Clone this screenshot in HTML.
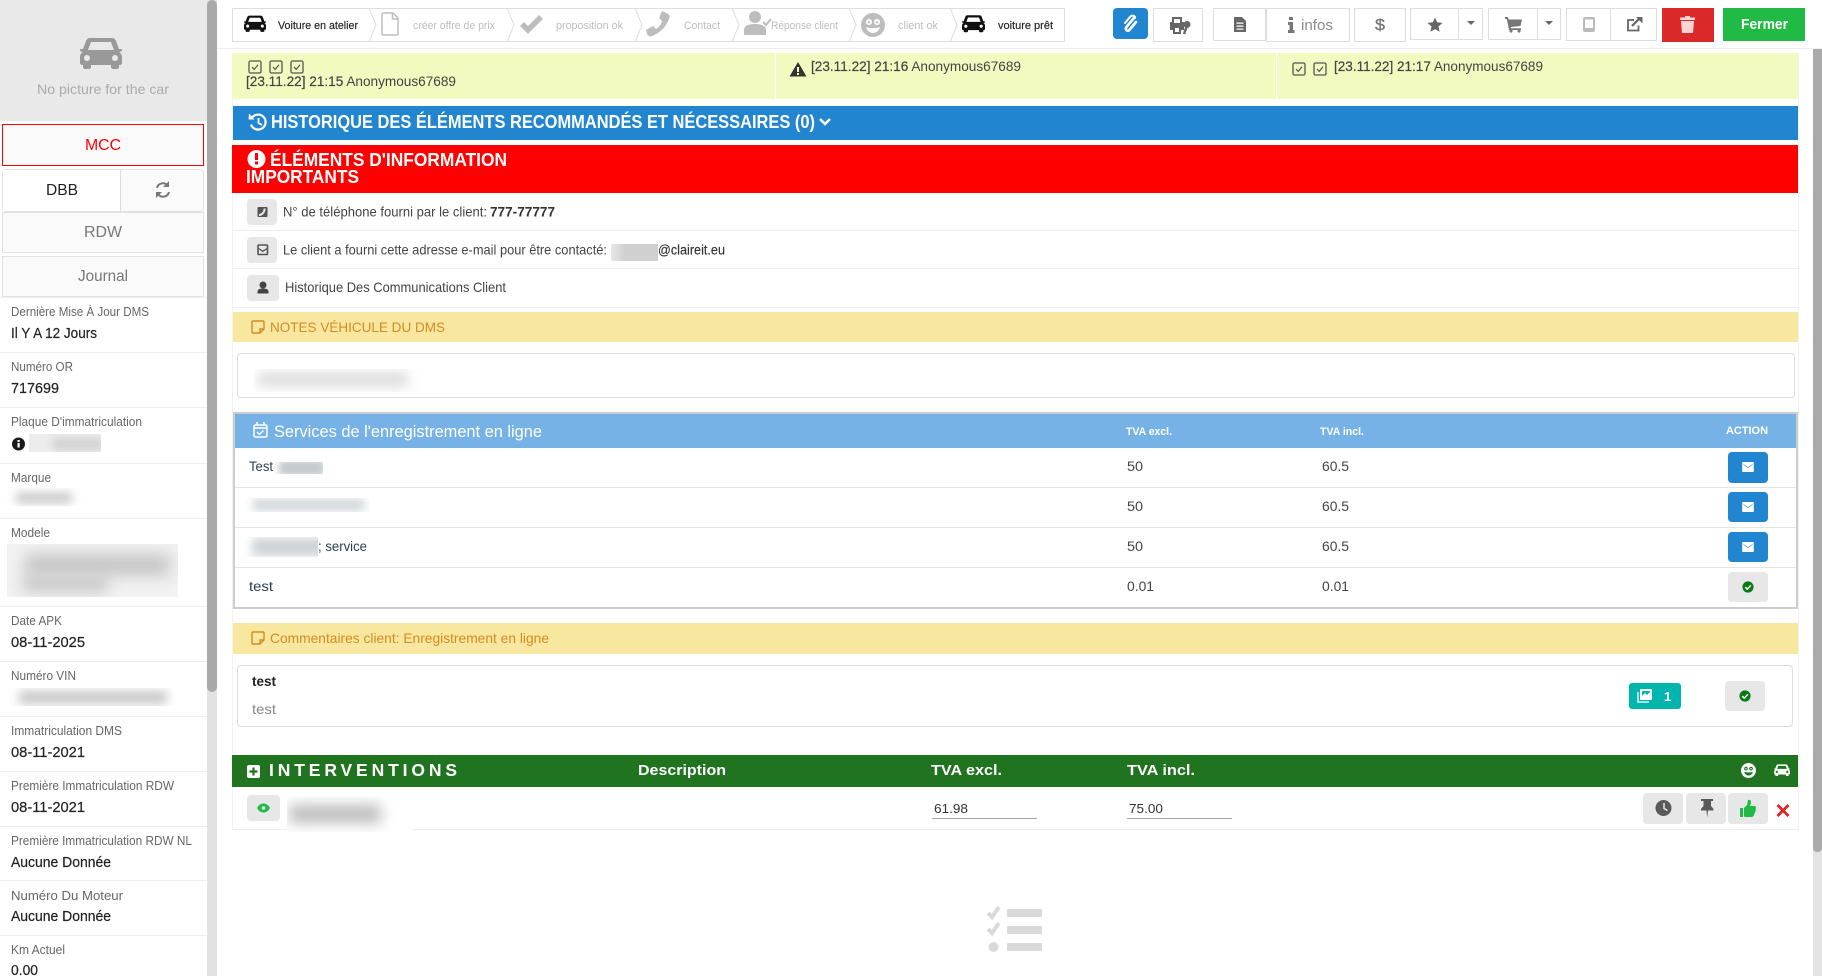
<!DOCTYPE html>
<html lang="fr"><head><meta charset="utf-8"><title>Voiture en atelier</title>
<style>
html,body{margin:0;padding:0;background:#fff}
body{position:relative;width:1822px;height:976px;overflow:hidden;font-family:"Liberation Sans",sans-serif}
.a{position:absolute;box-sizing:border-box}
.btn{position:absolute;box-sizing:border-box;background:#fff;border:1px solid #ddd}
.g{position:absolute;background:#e7e7e7;border-radius:4px}
.bl{position:absolute;background:#2185d0;border-radius:4px}
.hr{position:absolute;left:0;width:207px;height:1px;background:#eee}
.blur{position:absolute;overflow:hidden;background:#fff}
.blur i{position:absolute;display:block;background:#b5b5b5;filter:blur(5px)}
svg.over{position:absolute;left:0;top:0;font-family:"Liberation Sans",sans-serif}
.l{font-size:13px;fill:#666}
.v{font-size:14.5px;fill:#222;stroke:#222;stroke-width:.2px}
.st{font-size:11px;fill:#bdbdbd}
.n{font-size:14px;fill:#444}
.s{font-size:14px;fill:#444}
.w{fill:#fff}
.h{font-size:18px;font-weight:bold;fill:#fff}
</style></head><body>

<!-- sidebar -->
<div class="a" style="left:0;top:0;width:207px;height:121px;background:#e9e9e9"></div>
<div class="a" style="left:207px;top:0;width:10px;height:976px;background:#e2e2e2"></div>
<div class="a" style="left:207px;top:0;width:10px;height:692px;background:#a9a9a9;border-radius:5px"></div>
<div class="a" style="left:2px;top:124px;width:202px;height:42px;background:#fafafa;border:1px solid #f00"></div>
<div class="a" style="left:2px;top:169px;width:202px;height:43px;background:#fafafa;border:1px solid #e2e2e2;border-radius:4px"></div>
<div class="a" style="left:3px;top:170px;width:118px;height:41px;background:#fff;border-right:1px solid #ddd"></div>
<div class="a" style="left:2px;top:212px;width:202px;height:41px;background:#fafafa;border:1px solid #e2e2e2"></div>
<div class="a" style="left:2px;top:256px;width:202px;height:41px;background:#fafafa;border:1px solid #e2e2e2"></div>
<div class="hr" style="top:297px"></div><div class="hr" style="top:352px"></div><div class="hr" style="top:407px"></div><div class="hr" style="top:463px"></div><div class="hr" style="top:518px"></div><div class="hr" style="top:606px"></div><div class="hr" style="top:661px"></div><div class="hr" style="top:716px"></div><div class="hr" style="top:771px"></div><div class="hr" style="top:826px"></div><div class="hr" style="top:880px"></div><div class="hr" style="top:935px"></div>
<div class="blur" style="left:29px;top:434px;width:72px;height:18px;background:#ececec"><i style="left:24px;top:4px;width:50px;height:12px;background:#d2d2d2;filter:blur(4px)"></i></div>
<div class="blur" style="left:6px;top:488px;width:76px;height:18px"><i style="left:10px;top:5px;width:56px;height:10px;background:#c4c4c4;filter:blur(5px)"></i></div>
<div class="blur" style="left:7px;top:544px;width:171px;height:53px;background:#f2f2f2"><i style="left:18px;top:11px;width:145px;height:20px;background:#c2c2c2;filter:blur(8px)"></i><i style="left:16px;top:32px;width:85px;height:16px;background:#c8c8c8;filter:blur(7px)"></i></div>
<div class="blur" style="left:7px;top:688px;width:171px;height:18px"><i style="left:12px;top:3px;width:148px;height:13px;background:#c8c8c8;filter:blur(5px)"></i></div>

<!-- top bar -->
<div class="a" style="left:217px;top:48px;width:1605px;height:1px;background:#eee"></div>
<div class="a" style="left:232px;top:8px;width:833px;height:34px;border:1px solid #ddd"></div>
<div class="btn" style="left:1113px;top:8px;width:35px;height:31px;background:#2185d0;border:0;border-radius:4px"></div>
<div class="btn" style="left:1153px;top:8px;width:50px;height:34px"></div>
<div class="btn" style="left:1213px;top:8px;width:53px;height:33px"></div>
<div class="btn" style="left:1266px;top:8px;width:84px;height:34px"></div>
<div class="btn" style="left:1354px;top:8px;width:52px;height:34px"></div>
<div class="btn" style="left:1410px;top:8px;width:49px;height:32px"></div>
<div class="btn" style="left:1458px;top:8px;width:25px;height:32px"></div>
<div class="btn" style="left:1488px;top:8px;width:50px;height:32px"></div>
<div class="btn" style="left:1537px;top:8px;width:24px;height:32px"></div>
<div class="btn" style="left:1566px;top:8px;width:45px;height:33px"></div>
<div class="btn" style="left:1610px;top:8px;width:47px;height:33px"></div>
<div class="a" style="left:1662px;top:8px;width:52px;height:34px;background:#db2828"></div>
<div class="a" style="left:1723px;top:8px;width:82px;height:33px;background:#21ba45"></div>

<!-- main content frame -->
<div class="a" style="left:232px;top:53px;width:1567px;height:776px;border-left:1px solid #f2f2f2;border-right:1px solid #f2f2f2"></div>
<div class="a" style="left:1813px;top:49px;width:9px;height:927px;background:#e4e4e4"></div>
<div class="a" style="left:1813px;top:49px;width:9px;height:803px;background:#aaa;border-radius:0 0 4px 4px"></div>

<div class="a" style="left:232px;top:53px;width:1566px;height:46px;background:#f3fabf"></div>
<div class="a" style="left:775px;top:53px;width:1px;height:46px;background:#fff"></div>
<div class="a" style="left:1276px;top:53px;width:1px;height:46px;background:#fff"></div>
<div class="a" style="left:233px;top:106px;width:1565px;height:34px;background:#2185d0"></div>
<div class="a" style="left:232px;top:145px;width:1566px;height:48px;background:#f00"></div>
<div class="a" style="left:233px;top:230px;width:1565px;height:1px;background:#eee"></div>
<div class="a" style="left:233px;top:268px;width:1565px;height:1px;background:#eee"></div>
<div class="a" style="left:233px;top:307px;width:1565px;height:1px;background:#eee"></div>
<div class="g" style="left:247px;top:199px;width:30px;height:26px"></div>
<div class="g" style="left:247px;top:237px;width:30px;height:26px"></div>
<div class="g" style="left:247px;top:275px;width:32px;height:26px"></div>
<div class="blur" style="left:611px;top:244px;width:47px;height:17px;background:linear-gradient(90deg,#e8e8e8,#d0d0d0 30%,#d0d0d0)"></div>

<div class="a" style="left:233px;top:312px;width:1565px;height:30px;background:#f8e89f"></div>
<div class="a" style="left:237px;top:353px;width:1558px;height:45px;border:1px solid #ddd;border-radius:4px"></div>
<div class="blur" style="left:254px;top:369px;width:171px;height:23px"><i style="left:4px;top:3px;width:150px;height:15px;background:#dcdcdc;filter:blur(6px)"></i></div>

<!-- table -->
<div class="a" style="left:233px;top:412px;width:1565px;height:197px;border:2px solid #ccc"></div>
<div class="a" style="left:235px;top:414px;width:1561px;height:34px;background:#76b2e6"></div>
<div class="a" style="left:235px;top:487px;width:1561px;height:1px;background:#e4e4e4"></div>
<div class="a" style="left:235px;top:527px;width:1561px;height:1px;background:#e4e4e4"></div>
<div class="a" style="left:235px;top:567px;width:1561px;height:1px;background:#e4e4e4"></div>
<div class="bl" style="left:1728px;top:452px;width:40px;height:31px"></div>
<div class="bl" style="left:1728px;top:492px;width:40px;height:30px"></div>
<div class="bl" style="left:1728px;top:532px;width:40px;height:30px"></div>
<div class="g" style="left:1728px;top:572px;width:40px;height:30px"></div>
<div class="blur" style="left:273px;top:462px;width:50px;height:12px"><i style="left:6px;top:-2px;width:46px;height:16px;background:#c2c8cc;filter:blur(4px)"></i></div>
<div class="blur" style="left:245px;top:498px;width:125px;height:14px"><i style="left:8px;top:2px;width:112px;height:10px;background:#c8ced2;filter:blur(5px)"></i></div>
<div class="blur" style="left:240px;top:537px;width:78px;height:20px"><i style="left:12px;top:1px;width:76px;height:18px;background:#cdd2d6;filter:blur(5px)"></i></div>

<!-- comments -->
<div class="a" style="left:233px;top:623px;width:1565px;height:31px;background:#f8e89f"></div>
<div class="a" style="left:237px;top:665px;width:1556px;height:62px;border:1px solid #ddd;border-radius:4px"></div>
<div class="a" style="left:1629px;top:683px;width:52px;height:26px;background:#00b5ad;border-radius:3px"></div>
<div class="g" style="left:1725px;top:681px;width:40px;height:30px"></div>

<!-- interventions -->
<div class="a" style="left:232px;top:755px;width:1566px;height:32px;background:#21741f"></div>
<div class="a" style="left:232px;top:829px;width:1567px;height:1px;background:#eee"></div>
<div class="g" style="left:247px;top:795px;width:33px;height:26px"></div>
<div class="blur" style="left:287px;top:797px;width:126px;height:35px"><i style="left:2px;top:8px;width:92px;height:18px;background:#bbb;filter:blur(7px)"></i></div>
<div class="a" style="left:932px;top:818px;width:105px;height:1px;background:#aaa"></div>
<div class="a" style="left:1127px;top:818px;width:105px;height:1px;background:#aaa"></div>
<div class="g" style="left:1643px;top:793px;width:40px;height:31px"></div>
<div class="g" style="left:1686px;top:793px;width:40px;height:31px"></div>
<div class="g" style="left:1728px;top:793px;width:40px;height:31px"></div>

<svg class="over" width="1822" height="976" viewBox="0 0 1822 976">
<defs>
<symbol id="car" viewBox="0 0 42 32"><path fill-rule="evenodd" d="M10 1h22c2 0 3 1 4 3l3 8h2c1 0 1 1 1 2l-3 1c2 1 3 3 3 5v6c0 1-1 2-2 2h-1v2c0 1-1 2-2 2h-4c-1 0-2-1-2-2v-2H11v2c0 1-1 2-2 2H5c-1 0-2-1-2-2v-2H2c-1 0-2-1-2-2v-6c0-2 1-4 3-5L0 14c0-1 0-2 1-2h2l3-8c1-2 2-3 4-3zM11 5l-3 8h26l-3-8zM7 18a3 3 0 1 0 .01 0zM35 18a3 3 0 1 0 .01 0z"/></symbol>
<symbol id="cb" viewBox="0 0 14 14"><rect x="1" y="1" width="12" height="12" rx="1.5" fill="none" stroke="#555" stroke-width="1.3"/><path d="M4 7l2.2 2.4L10 4.8" fill="none" stroke="#555" stroke-width="1.2"/></symbol>
<symbol id="mail" viewBox="0 0 14 12"><path fill-rule="evenodd" d="M1 0h12a1 1 0 0 1 1 1v10a1 1 0 0 1-1 1H1a1 1 0 0 1-1-1V1a1 1 0 0 1 1-1zM1.5 3.2l5.500 4 5.500-4v-.8l-5.500 3.900-5.500-3.900z"/></symbol>
<symbol id="ok" viewBox="0 0 14 14"><circle cx="7" cy="7" r="6.5" fill="#0a7a14"/><path d="M3.8 7.2l2.3 2.3 4.2-4.4" fill="none" stroke="#fff" stroke-width="1.8"/></symbol>
<symbol id="note" viewBox="0 0 14 14"><path d="M2 1h10a1 1 0 0 1 1 1v7l-4 4H2a1 1 0 0 1-1-1V2a1 1 0 0 1 1-1zM13 9H9v4" fill="none" stroke="#d68a22" stroke-width="1.4"/></symbol>
<symbol id="smile" viewBox="0 0 24 24"><path fill-rule="evenodd" d="M12 0a12 12 0 1 1-.01 0zM8 6a3 3 0 1 0 .01 0zM16 6a3 3 0 1 0 .01 0zM8 8a1.2 1.2 0 1 1-.01 0zM16 8a1.2 1.2 0 1 1-.01 0zM5 14c1 4 4 6 7 6s6-2 7-6c-4 1.500-10 1.500-14 0z"/></symbol>
</defs>

<!-- sidebar text -->
<use href="#car" x="80" y="37" width="42" height="32" fill="#999"/>
<text x="37" y="94" font-size="14" fill="#aaa" textLength="132" lengthAdjust="spacingAndGlyphs">No picture for the car</text>
<text x="85" y="150" font-size="16" fill="#f00" textLength="36" lengthAdjust="spacingAndGlyphs">MCC</text>
<text x="46" y="195" font-size="16" fill="#222" textLength="32" lengthAdjust="spacingAndGlyphs">DBB</text>
<g fill="none" stroke="#777" stroke-width="2"><path d="M157 188a6 6 0 0 1 10.500-2.500"/><path d="M169 192a6 6 0 0 1-10.500 2.500"/></g><path d="M169 181v6h-6zM156 198v-6h6z" fill="#777"/>
<text x="84" y="237" font-size="16" fill="#777" textLength="38" lengthAdjust="spacingAndGlyphs">RDW</text>
<text x="78" y="281" font-size="16" fill="#777" textLength="50" lengthAdjust="spacingAndGlyphs">Journal</text>

<text class="l" x="11" y="316" textLength="138" lengthAdjust="spacingAndGlyphs">Dernière Mise À Jour DMS</text>
<text class="v" x="11" y="338" textLength="86" lengthAdjust="spacingAndGlyphs">Il Y A 12 Jours</text>
<text class="l" x="11" y="371" textLength="62" lengthAdjust="spacingAndGlyphs">Numéro OR</text>
<text class="v" x="11" y="393" textLength="48" lengthAdjust="spacingAndGlyphs">717699</text>
<text class="l" x="11" y="426" textLength="131" lengthAdjust="spacingAndGlyphs">Plaque D'immatriculation</text>
<circle cx="18.500" cy="444" r="6.500" fill="#1b1b1b"/><rect x="17.500" y="443" width="2.200" height="4.500" fill="#fff"/><rect x="17.500" y="440" width="2.200" height="2" fill="#fff"/>
<text class="l" x="11" y="482" textLength="40" lengthAdjust="spacingAndGlyphs">Marque</text>
<text class="l" x="11" y="537" textLength="39" lengthAdjust="spacingAndGlyphs">Modele</text>
<text class="l" x="11" y="625" textLength="51" lengthAdjust="spacingAndGlyphs">Date APK</text>
<text class="v" x="11" y="647" textLength="74" lengthAdjust="spacingAndGlyphs">08-11-2025</text>
<text class="l" x="11" y="680" textLength="65" lengthAdjust="spacingAndGlyphs">Numéro VIN</text>
<text class="l" x="11" y="735" textLength="111" lengthAdjust="spacingAndGlyphs">Immatriculation DMS</text>
<text class="v" x="11" y="757" textLength="74" lengthAdjust="spacingAndGlyphs">08-11-2021</text>
<text class="l" x="11" y="790" textLength="163" lengthAdjust="spacingAndGlyphs">Première Immatriculation RDW</text>
<text class="v" x="11" y="812" textLength="74" lengthAdjust="spacingAndGlyphs">08-11-2021</text>
<text class="l" x="11" y="845" textLength="181" lengthAdjust="spacingAndGlyphs">Première Immatriculation RDW NL</text>
<text class="v" x="11" y="867" textLength="100" lengthAdjust="spacingAndGlyphs">Aucune Donnée</text>
<text class="l" x="11" y="900" textLength="112" lengthAdjust="spacingAndGlyphs">Numéro Du Moteur</text>
<text class="v" x="11" y="921" textLength="100" lengthAdjust="spacingAndGlyphs">Aucune Donnée</text>
<text class="l" x="11" y="954" textLength="54" lengthAdjust="spacingAndGlyphs">Km Actuel</text>
<text class="v" x="11" y="975" textLength="27" lengthAdjust="spacingAndGlyphs">0.00</text>

<!-- steps -->
<g fill="none" stroke="#ddd"><path d="M369 8l7 17-7 17M507 8l7 17-7 17M635 8l7 17-7 17M732 8l7 17-7 17M849 8l7 17-7 17M950 8l7 17-7 17"/></g>
<use href="#car" x="244" y="14" width="22" height="19" fill="#111"/>
<text x="278" y="29" font-size="11" font-weight="400" fill="#222" stroke="#222" stroke-width=".15" textLength="80" lengthAdjust="spacingAndGlyphs">Voiture en atelier</text>
<path d="M383 13h10l5 5v16a1 1 0 0 1-1 1h-14a1 1 0 0 1-1-1V14a1 1 0 0 1 1-1zM392.500 13v6h5.500" fill="none" stroke="#bdbdbd" stroke-width="1.5"/>
<text class="st" x="413" y="29" textLength="82" lengthAdjust="spacingAndGlyphs">créer offre de prix</text>
<path d="M522 24l6 6 13-13" fill="none" stroke="#bdbdbd" stroke-width="5.500"/>
<text class="st" x="556" y="29" textLength="67" lengthAdjust="spacingAndGlyphs">proposition ok</text>
<path d="M662 11l6 3c2 1 2 3 1 5-3 8-9 14-17 17-2 1-4 0-5-2l-1-4 7-4 3 3c3-2 5-4 6-8l-3-3z" fill="#bdbdbd"/>
<text class="st" x="684" y="29" textLength="36" lengthAdjust="spacingAndGlyphs">Contact</text>
<circle cx="755" cy="17" r="6" fill="#bdbdbd"/><path d="M744 35v-5c0-4 4-6 11-6s11 2 11 6v5z" fill="#bdbdbd"/><path d="M763 22l3 3 5-6" fill="none" stroke="#bdbdbd" stroke-width="2"/>
<text class="st" x="771" y="29" textLength="67" lengthAdjust="spacingAndGlyphs">Réponse client</text>
<use href="#smile" x="861" y="13" width="24" height="24" fill="#bdbdbd"/>
<text class="st" x="898" y="29" textLength="40" lengthAdjust="spacingAndGlyphs">client ok</text>
<use href="#car" x="962" y="14" width="23" height="19" fill="#111"/>
<text x="998" y="29" font-size="11" fill="#222" stroke="#222" stroke-width=".15" textLength="55" lengthAdjust="spacingAndGlyphs">voiture prêt</text>

<!-- toolbar icons -->
<path d="M1134 18l-7.500 9c-2 2.500 1 5 3 3l6.500-8" fill="none" stroke="#fff" stroke-width="2.600" stroke-linecap="round"/><path d="M1130 17l-5 6" fill="none" stroke="#fff" stroke-width="2" stroke-linecap="round"/><path d="M1130 17c2-2.500 6-1 5 1.500" fill="none" stroke="#fff" stroke-width="2"/>
<path d="M1172 17h10v5h2v8h-3v4h-8v-4h-3v-8h2zM1174 19v4h6v-4zM1175 28v4h4v-4z" fill="#666" fill-rule="evenodd"/><circle cx="1187" cy="24.500" r="3.500" fill="#666"/><path d="M1186.500 27l-2.500 7" stroke="#666" stroke-width="2.500"/>
<path d="M1234 17h8l4 4v11h-12zM1236.500 22.500h7v1.300h-7zM1236.500 25.500h7v1.300h-7zM1236.500 28.500h7v1.300h-7z" fill="#666" fill-rule="evenodd"/>
<path d="M1289 17h4v3h-4zM1288 22h5v8h1.500v3h-6.500v-3h1.500v-5h-1.500z" fill="#777"/>
<text x="1301" y="30" font-size="15" fill="#8a8a8a" textLength="32" lengthAdjust="spacingAndGlyphs">infos</text>
<text x="1375" y="30" font-size="16" fill="#777" stroke="#777" stroke-width=".3" textLength="10" lengthAdjust="spacingAndGlyphs">$</text>
<path d="M1435 17.500l2.200 4.800 5.300.6-4 3.600 1.100 5.200-4.600-2.600-4.600 2.600 1.100-5.200-4-3.600 5.300-.6z" fill="#666"/>
<path d="M1467 21h8l-4 4z" fill="#666"/><path d="M1545 21h8l-4 4z" fill="#666"/>
<path d="M1505 17h3l.6 2.500h13.400l-1.500 6.500-9.800 1 .3 1.300h10v1.700h-12l-2.200-11h-1.800zM1511 29.500a1.600 1.600 0 1 1-.01 0zM1519 29.500a1.600 1.600 0 1 1-.01 0z" fill="#777"/>
<path d="M1585 17h8a2 2 0 0 1 2 2v11a2 2 0 0 1-2 2h-8a2 2 0 0 1-2-2V19a2 2 0 0 1 2-2zM1585 19.500v8.500h8v-8.500z" fill="#bbb" fill-rule="evenodd"/>
<path d="M1634 20h-6v10.500h10.500v-5" fill="none" stroke="#666" stroke-width="1.800"/><path d="M1632 26l7-7" stroke="#666" stroke-width="2.200"/><path d="M1636 17h6.500v6.500z" fill="#666"/>
<path d="M1685 16h5v1.500h5v2.500h-15v-2.500h5zM1681 21h13l-1 12h-11z" fill="#ffd4d4"/>
<text x="1741" y="29" font-size="15" font-weight="bold" fill="#fff" textLength="47" lengthAdjust="spacingAndGlyphs">Fermer</text>

<!-- notices -->
<use href="#cb" x="248" y="60" width="14" height="14"/><use href="#cb" x="269" y="60" width="14" height="14"/><use href="#cb" x="290" y="60" width="14" height="14"/>
<text class="n" x="246" y="86" textLength="210" lengthAdjust="spacingAndGlyphs"><tspan stroke="#444" stroke-width=".2">[23.11.22] 21:15</tspan> Anonymous67689</text>
<path d="M798 62l8.500 14.500h-17zM797 67v5h2v-5zM797 73v2h2v-2z" fill="#333" fill-rule="evenodd"/>
<text class="n" x="811" y="71" textLength="210" lengthAdjust="spacingAndGlyphs"><tspan stroke="#444" stroke-width=".2">[23.11.22] 21:16</tspan> Anonymous67689</text>
<use href="#cb" x="1292" y="62" width="14" height="14"/><use href="#cb" x="1313" y="62" width="14" height="14"/>
<text class="n" x="1334" y="71" textLength="209" lengthAdjust="spacingAndGlyphs"><tspan stroke="#444" stroke-width=".2">[23.11.22] 21:17</tspan> Anonymous67689</text>

<!-- blue header -->
<path d="M251.500 118.500a7.500 7.500 0 1 1-.5 6" fill="none" stroke="#fff" stroke-width="2.200"/><path d="M249 113.500l5.500 6h-6z" fill="#fff"/><path d="M258.500 118v5l3.500 2" fill="none" stroke="#fff" stroke-width="1.800"/>
<text class="h" x="271" y="128" textLength="544" lengthAdjust="spacingAndGlyphs">HISTORIQUE DES ÉLÉMENTS RECOMMANDÉS ET NÉCESSAIRES (0)</text>
<path d="M820 119l5 5 5-5" fill="none" stroke="#fff" stroke-width="2.500"/>

<!-- red header -->
<circle cx="256.500" cy="159" r="9" fill="#fff"/><rect x="255" y="153" width="3" height="7" fill="#f00"/><rect x="255" y="161.500" width="3" height="3" fill="#f00"/>
<text class="h" x="270" y="166" textLength="237" lengthAdjust="spacingAndGlyphs">ÉLÉMENTS D'INFORMATION</text>
<text class="h" x="246" y="183" textLength="113" lengthAdjust="spacingAndGlyphs">IMPORTANTS</text>

<!-- list rows -->
<rect x="257.500" y="207" width="10" height="10" rx="1" fill="#555"/><path d="M264.500 208.500c.3 3.500-2.500 6.500-5.500 6.500" fill="none" stroke="#e7e7e7" stroke-width="2"/>
<text class="s" x="283" y="216.500" font-size="13.500" textLength="204" lengthAdjust="spacingAndGlyphs">N° de téléphone fourni par le client:</text>
<text x="490" y="216.500" font-size="13.500" font-weight="bold" fill="#333" textLength="65" lengthAdjust="spacingAndGlyphs">777-77777</text>
<rect x="258" y="245" width="9.500" height="9.500" rx="1" fill="none" stroke="#555" stroke-width="1.600"/><path d="M258.500 248.500l4.300 2.800 4.300-2.800" fill="none" stroke="#555" stroke-width="1.300"/>
<text class="s" x="283" y="254.500" font-size="13.500" textLength="324" lengthAdjust="spacingAndGlyphs">Le client a fourni cette adresse e-mail pour être contacté:</text>
<text x="658" y="254.500" font-size="13.500" fill="#333" stroke="#333" stroke-width=".15" textLength="67" lengthAdjust="spacingAndGlyphs">@claireit.eu</text>
<circle cx="263" cy="285" r="3.500" fill="#444"/><path d="M257.500 293.500v-2c0-2 2-3 5.500-3s5.500 1 5.500 3v2z" fill="#444"/>
<text class="s" x="285" y="292" font-size="13.500" textLength="221" lengthAdjust="spacingAndGlyphs">Historique Des Communications Client</text>

<!-- notes -->
<use href="#note" x="251" y="320" width="14" height="14"/>
<text x="270" y="332" font-size="14" fill="#d68a22" textLength="175" lengthAdjust="spacingAndGlyphs">NOTES VÉHICULE DU DMS</text>

<!-- table text -->
<rect x="254" y="425" width="13" height="12" rx="1.500" fill="none" stroke="#fff" stroke-width="1.500"/><path d="M254 428h13M257 422v3M264 422v3" stroke="#fff" stroke-width="1.500"/><path d="M257 432l2.500 2.500 4-4" fill="none" stroke="#fff" stroke-width="1.300"/>
<text x="274" y="437" font-size="16.500" class="w" textLength="268" lengthAdjust="spacingAndGlyphs">Services de l'enregistrement en ligne</text>
<text x="1126" y="435" font-size="11" font-weight="bold" fill="#fff" textLength="46" lengthAdjust="spacingAndGlyphs">TVA excl.</text>
<text x="1320" y="435" font-size="11" font-weight="bold" fill="#fff" textLength="44" lengthAdjust="spacingAndGlyphs">TVA incl.</text>
<text x="1726" y="434" font-size="11" font-weight="bold" fill="#fff" textLength="42" lengthAdjust="spacingAndGlyphs">ACTION</text>
<g font-size="13.500" fill="#2c3e50">
<text x="249" y="471" textLength="24" lengthAdjust="spacingAndGlyphs">Test</text>
<text x="318" y="551" textLength="49" lengthAdjust="spacingAndGlyphs">; service</text>
<text x="249" y="591" textLength="24" lengthAdjust="spacingAndGlyphs">test</text>
</g>
<g font-size="14" fill="#444">
<text x="1127" y="471" textLength="16" lengthAdjust="spacingAndGlyphs">50</text><text x="1322" y="471" textLength="27" lengthAdjust="spacingAndGlyphs">60.5</text>
<text x="1127" y="511" textLength="16" lengthAdjust="spacingAndGlyphs">50</text><text x="1322" y="511" textLength="27" lengthAdjust="spacingAndGlyphs">60.5</text>
<text x="1127" y="551" textLength="16" lengthAdjust="spacingAndGlyphs">50</text><text x="1322" y="551" textLength="27" lengthAdjust="spacingAndGlyphs">60.5</text>
<text x="1127" y="591" textLength="27" lengthAdjust="spacingAndGlyphs">0.01</text><text x="1322" y="591" textLength="27" lengthAdjust="spacingAndGlyphs">0.01</text>
</g>
<use href="#mail" x="1742" y="462" width="12" height="10" fill="#fff"/>
<use href="#mail" x="1742" y="502" width="12" height="10" fill="#fff"/>
<use href="#mail" x="1742" y="542" width="12" height="10" fill="#fff"/>
<use href="#ok" x="1742" y="581" width="12" height="12"/>

<!-- comments text -->
<use href="#note" x="251" y="631" width="14" height="14"/>
<text x="270" y="643" font-size="14" fill="#d68a22" textLength="279" lengthAdjust="spacingAndGlyphs">Commentaires client: Enregistrement en ligne</text>
<text x="252" y="686" font-size="14" font-weight="bold" fill="#222" textLength="24" lengthAdjust="spacingAndGlyphs">test</text>
<text x="252" y="714" font-size="14" fill="#888" textLength="24" lengthAdjust="spacingAndGlyphs">test</text>
<path d="M1641 689h10a1 1 0 0 1 1 1v9a1 1 0 0 1-1 1h-10a1 1 0 0 1-1-1v-9a1 1 0 0 1 1-1zM1642 691v5l3-3 2 2 3-3v-1z" fill="#fff" fill-rule="evenodd"/><path d="M1638 692v10h11" fill="none" stroke="#fff" stroke-width="1.300"/>
<text x="1664" y="701" font-size="13" font-weight="bold" fill="#fff">1</text>
<use href="#ok" x="1739" y="690" width="12" height="12"/>

<!-- interventions text -->
<rect x="247" y="765" width="13" height="13" rx="2" fill="#fff"/><path d="M253.500 767.500v8M249.500 771.500h8" stroke="#21741f" stroke-width="2.200"/>
<text x="269" y="776" font-size="17.500" font-weight="bold" fill="#fff" textLength="188" lengthAdjust="spacing">INTERVENTIONS</text>
<text x="638" y="775" font-size="15" font-weight="bold" fill="#fff" textLength="88" lengthAdjust="spacingAndGlyphs">Description</text>
<text x="931" y="775" font-size="15" font-weight="bold" fill="#fff" textLength="71" lengthAdjust="spacingAndGlyphs">TVA excl.</text>
<text x="1127" y="775" font-size="15" font-weight="bold" fill="#fff" textLength="68" lengthAdjust="spacingAndGlyphs">TVA incl.</text>
<use href="#smile" x="1741" y="763" width="15" height="15" fill="#fff"/>
<use href="#car" x="1774" y="764" width="16" height="12" fill="#fff"/>

<path d="M257 808c1.700-3 3.800-4.500 6.500-4.500s4.800 1.500 6.500 4.500c-1.700 3-3.800 4.500-6.500 4.500s-4.800-1.500-6.500-4.500z" fill="#21ba45"/><circle cx="263.500" cy="808" r="1.800" fill="#e7e7e7"/>
<text x="934" y="813" font-size="13" fill="#333" textLength="34" lengthAdjust="spacingAndGlyphs">61.98</text>
<text x="1129" y="813" font-size="13" fill="#333" textLength="34" lengthAdjust="spacingAndGlyphs">75.00</text>
<circle cx="1663.500" cy="808" r="8" fill="#5a5a5a"/><path d="M1664 803v5.500l3.500 2" fill="none" stroke="#e7e7e7" stroke-width="1.500"/>
<path d="M1701 799h12v2h-2v5l2.500 3v1.500h-5.500l-.8 7-.8-7h-5.400V809l2.500-3v-5h-2.500z" fill="#5a5a5a"/>
<path d="M1740 808h3v9h-3zM1744 808l3-3 1-5c2-1 3.500 1 3 3l-1 3h4.500c1.500 0 2 2 1 3 .5 1 .5 2-.5 3 0 1-.5 2-1 2.500 0 1-1 2.500-2.500 2.500h-6c-1 0-1.500-.5-1.500-1z" fill="#21ba45"/>
<path d="M1778.500 804l4.500 4.500 4.500-4.500 2 2-4.500 4.500 4.500 4.500-2 2-4.500-4.500-4.500 4.500-2-2 4.500-4.500-4.500-4.500z" fill="#db2828"/>

<!-- empty state -->
<g fill="none" stroke="#d9d9d9" stroke-width="4"><path d="M988 913l4 4 7-10"/><path d="M988 929l4 4 7-10"/></g>
<circle cx="993.500" cy="947" r="5" fill="#d9d9d9"/>
<g fill="#d9d9d9"><rect x="1007" y="909" width="35" height="8" rx="1"/><rect x="1007" y="926" width="35" height="8" rx="1"/><rect x="1007" y="943" width="35" height="8" rx="1"/></g>
</svg>
</body></html>
